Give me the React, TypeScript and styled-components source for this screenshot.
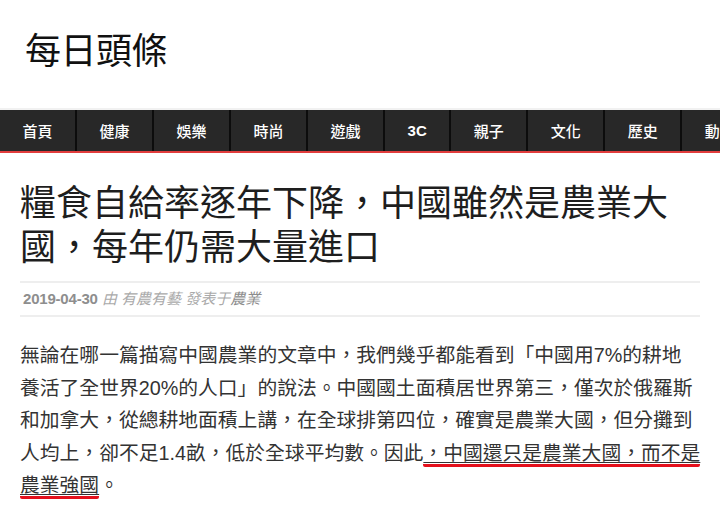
import styled, { createGlobalStyle } from 'styled-components';

const NAV_ITEMS = ['首頁', '健康', '娛樂', '時尚', '遊戲', '3C', '親子', '文化', '歷史', '動漫', '美食']

const CJK = `"Liberation Sans", "Noto Sans CJK TC", sans-serif`

export default function App() {
    return (
        <Page>
            <GlobalStyle />
            <Header>
                <Logo>每日頭條</Logo>
            </Header>

            <Nav>
                {NAV_ITEMS.map(item => (
                    <NavItem key={item} $latin={/^[A-Za-z0-9]+$/.test(item)}>
                        {item}
                    </NavItem>
                ))}
            </Nav>

            <Article>
                <Title>糧食自給率逐年下降，中國雖然是農業大國，每年仍需大量進口</Title>

                <Meta>
                    <MetaDate>2019-04-30</MetaDate>
                    <MetaBy> 由 有農有藝 發表于</MetaBy>
                    <MetaCategory>農業</MetaCategory>
                </Meta>

                {/* line ends follow the original page */}
                <Body>
                    無論在哪一篇描寫中國農業的文章中，我們幾乎都能看到「中國用7%的耕地<br />
                    養活了全世界20%的人口」的說法。中國國土面積居世界第三，僅次於俄羅斯<br />
                    和加拿大，從總耕地面積上講，在全球排第四位，確實是農業大國，但分攤到<br />
                    人均上，卻不足1.4畝，低於全球平均數。因此
                    <Marked>，中國還只是農業大國，而不是<br />農業強國</Marked>
                    。
                </Body>
            </Article>
        </Page>
    )
}


const GlobalStyle = createGlobalStyle`
    html, body {
        margin: 0;
        padding: 0;
        background: #ffffff;
        overflow: hidden;
    }
    * {
        box-sizing: border-box;
    }
`
const Page = styled.div`
    width: 720px;
    min-height: 518px;
    background: #ffffff;
    font-family: ${CJK};
    overflow: hidden;
`
const Header = styled.header`
    height: 110px;
    display: flex;
    align-items: center;
    padding: 0 0 12px 25px;
    border-bottom: 2px solid #f1f1f1;
`
const Logo = styled.h1`
    margin: 0;
    font-family: "Noto Sans CJK TC", sans-serif;
    font-weight: 400;
    font-size: 36px;
    line-height: 40px;
    color: #111111;
    letter-spacing: -0.5px;
`
const Nav = styled.nav`
    display: flex;
    height: 43px;
    background: #282828;
    border-bottom: 2px solid #e23d3d;
    overflow: hidden;
    white-space: nowrap;
`
const NavItem = styled.a<{ $latin?: boolean }>`
    flex: none;
    display: flex;
    align-items: center;
    padding: 0 22.5px;
    border-right: 2px solid #0c0c0c;
    color: #ffffff;
    font-family: ${p => p.$latin ? '"Liberation Sans", sans-serif' : '"Noto Sans CJK TC", sans-serif'};
    font-weight: ${p => p.$latin ? 700 : 500};
    font-size: 15px;
    line-height: 41px;
    cursor: pointer;
`
const Article = styled.article`
    padding: 25px 20px 0;
`
const Title = styled.h1`
    margin: 0 0 15px;
    font-family: "Noto Sans CJK TC", sans-serif;
    font-weight: 400;
    font-size: 36px;
    line-height: 44px;
    color: #1e1e1e;
`
const Meta = styled.div`
    padding: 7px 3px;
    border-top: 2px solid #eeeeee;
    border-bottom: 2px solid #eeeeee;
    font-size: 15px;
    line-height: 18px;
    white-space: nowrap;
`
const MetaDate = styled.span`
    font-family: "Liberation Sans", sans-serif;
    font-weight: 700;
    color: #8e8e8e;
    letter-spacing: -0.2px;
`
const MetaBy = styled.span`
    font-style: italic;
    color: #aaaaaa;
`
const MetaCategory = styled.a`
    font-style: italic;
    color: #8c8c8c;
    cursor: pointer;
`
const Body = styled.p`
    width: 700px;
    margin: 22px 0 0;
    font-size: 19.8px;
    line-height: 32.5px;
    color: #333333;
    white-space: nowrap;
`
const Marked = styled.span`
    text-decoration: underline;
    text-decoration-thickness: 1px;
    text-underline-offset: 2px;
    border-bottom: 3px solid #e4101c;
    border-radius: 2px;
    box-decoration-break: clone;
    -webkit-box-decoration-break: clone;
`
